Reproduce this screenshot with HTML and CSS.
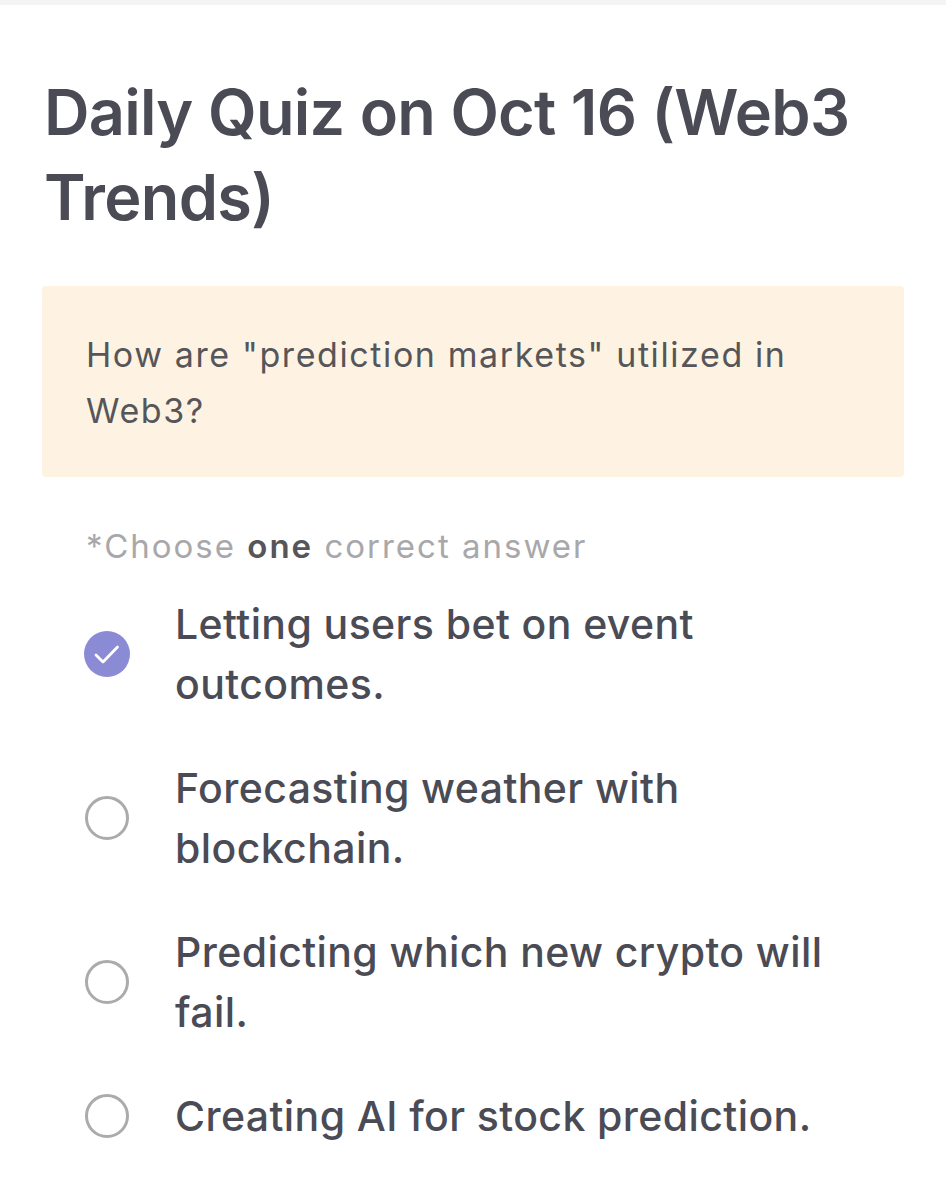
FILE: index.html
```html
<!DOCTYPE html>
<html>
<head>
<meta charset="utf-8">
<link rel="stylesheet" href="styles.css">
</head>
<body>
<div class="topbar"></div>
<main class="page">
  <h1 class="title">Daily Quiz on Oct 16 (Web3 Trends)</h1>
  <div class="question">How are "prediction markets" utilized in Web3?</div>
  <p class="hint">*Choose <b>one</b> correct answer</p>
  <ul class="options">
    <li class="option checked">
      <span class="radio"><svg viewBox="0 0 46 46" width="46" height="46"><circle cx="23" cy="23" r="23" fill="#8a8bd4"/><path d="M12 24l7 7 14.5-15" fill="none" stroke="#fff" stroke-width="2.8" stroke-linecap="round" stroke-linejoin="round"/></svg></span>
      <span class="label">Letting users bet on event outcomes.</span>
    </li>
    <li class="option">
      <span class="radio empty"></span>
      <span class="label">Forecasting weather with blockchain.</span>
    </li>
    <li class="option">
      <span class="radio empty"></span>
      <span class="label">Predicting which new crypto will fail.</span>
    </li>
    <li class="option">
      <span class="radio empty"></span>
      <span class="label">Creating AI for stock prediction.</span>
    </li>
  </ul>
</main>
</body>
</html>
```
FILE: styles.css
```css
* { box-sizing: border-box; }
html, body { margin: 0; padding: 0; background: #fff; }
body { font-family: Inter, "Liberation Sans", sans-serif; color: #4a4b55; }
.topbar { height: 5px; background: #f4f4f5; }
.page { padding: 0 42px 0 42px; }
.title {
  margin: 65px 0 0 2px;
  font-size: 63px;
  line-height: 85px;
  font-weight: 600;
  letter-spacing: -0.7px;
  color: #4a4b55;
  max-width: 830px;
}
.question {
  margin-top: 46px;
  background: #fef3e2;
  border-radius: 4px;
  padding: 41px 44px 38px;
  font-size: 34px;
  line-height: 56px;
  letter-spacing: 1.6px;
  color: #56565a;
  max-width: 862px;
}
.hint {
  margin: 45px 0 0 44px;
  font-size: 33px;
  line-height: 48px;
  letter-spacing: 2px;
  color: #a8a8aa;
}
.hint b { color: #55555a; font-weight: 600; }
.options { list-style: none; margin: 24px 0 0 0; padding: 0; }
.option {
  display: flex;
  align-items: center;
  gap: 45px;
  margin-bottom: 44px;
  padding-left: 42px;
}
.radio { flex: none; width: 46px; height: 46px; display: block; }
.radio svg { display: block; }
.radio.empty { border: 3px solid #ababab; border-radius: 50%; width: 44px; height: 44px; margin: 0 1px; }
.label {
  font-size: 41px;
  line-height: 60px;
  font-weight: 500;
  letter-spacing: 0.4px;
  color: #4a4b55;
  max-width: 680px;
}
```
